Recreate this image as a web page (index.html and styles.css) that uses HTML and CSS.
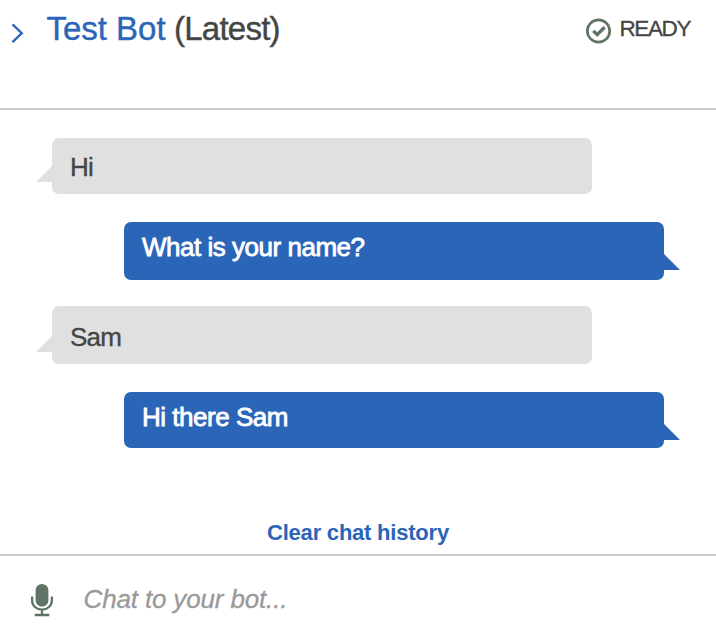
FILE: index.html
```html
<!DOCTYPE html>
<html lang="en">
<head>
<meta charset="utf-8">
<title>Test Bot</title>
<link rel="stylesheet" href="styles.css">
</head>
<body>
<main class="panel">
  <header class="header">
    <svg class="chevron" width="14" height="22" viewBox="0 0 14 22" fill="none" stroke="#2b65b8" stroke-width="2.3"><path d="M2.5 2.3 11.8 11.2 2.5 20.2"/></svg>
    <h1 class="title"><span class="bot-name">Test Bot</span> (Latest)</h1>
    <div class="status">
      <svg class="status-icon" width="26" height="26" viewBox="0 0 26 26" fill="none" stroke="#5f7464"><circle cx="12.5" cy="13" r="11.2" stroke-width="2.7"/><path d="M7.3 12.9 11.2 16.7 18.6 9.3" stroke-width="3.4"/></svg>
      <span class="status-text">READY</span>
    </div>
  </header>
  <section class="messages">
    <div class="bubble user">Hi</div>
    <div class="bubble bot tall">What is your name?</div>
    <div class="bubble user tall">Sam</div>
    <div class="bubble bot">Hi there Sam</div>
    <a class="clear">Clear chat history</a>
  </section>
  <footer class="composer">
    <svg class="mic" width="24" height="34" viewBox="0 0 24 34"><rect x="5.6" y="1" width="12.8" height="22.6" rx="6.4" fill="#5f7464"/><path d="M2.1 13.5V17.5A9.9 9.2 0 0 0 21.9 17.5V13.5M12 26.7V31.8M4.7 32H19.3" fill="none" stroke="#5f7464" stroke-width="2.3"/></svg>
    <input class="entry" type="text" placeholder="Chat to your bot..." aria-label="Chat to your bot">
  </footer>
</main>
</body>
</html>
```
FILE: styles.css
```css
* {
  box-sizing: border-box;
}

body {
  margin: 0;
  background: #fff;
  color: #444645;
  font-family: "Liberation Sans", Arial, sans-serif;
}

.panel {
  display: flex;
  flex-direction: column;
  width: 716px;
  height: 630px;
  overflow: hidden;
}

.header {
  display: flex;
  align-items: flex-start;
  height: 110px;
  padding: 10px 26px 0 10px;
  border-bottom: 2px solid #c5cad0;
}

.chevron {
  margin-top: 12px;
}

.title {
  margin: 0 0 0 22.5px;
  font-size: 33px;
  font-weight: 400;
  line-height: 38px;
  letter-spacing: -0.75px;
  -webkit-text-stroke: 0.4px currentColor;
}

.bot-name {
  color: #2b65b8;
  letter-spacing: -0.02px;
}

.status {
  display: flex;
  align-items: flex-start;
  margin-left: auto;
}

.status-icon {
  margin-top: 8px;
}

.status-text {
  margin-left: 7.5px;
  font-size: 22.5px;
  line-height: 38px;
  letter-spacing: -1.4px;
  -webkit-text-stroke: 0.3px currentColor;
}

.messages {
  display: flex;
  flex-direction: column;
  height: 444px;
  padding: 28px 52px 0;
}

.bubble {
  position: relative;
  width: 540px;
  height: 56px;
  margin-bottom: 28px;
  padding: 0 18px;
  border-radius: 7px;
  font-size: 26px;
  letter-spacing: -0.8px;
  -webkit-text-stroke: 0.35px currentColor;
}

.tall {
  height: 58px;
}

.bot.tall {
  margin-bottom: 26px;
}

.user {
  background: #e0e0e0;
  line-height: 58px;
}

.user.tall {
  line-height: 62px;
}

.bot {
  align-self: flex-end;
  background: #2b65b8;
  color: #fff;
  line-height: 50px;
  letter-spacing: -0.48px;
  -webkit-text-stroke: 0.8px currentColor;
}

.bubble::after {
  content: "";
  position: absolute;
  width: 16px;
  height: 16px;
}

.user::after {
  top: 28px;
  left: -16px;
  background: #e0e0e0;
  clip-path: polygon(100% 0, 100% 100%, 0 100%);
}

.user.tall::after {
  top: 30px;
}

.bot::after {
  top: 32px;
  right: -16px;
  background: #2b65b8;
  clip-path: polygon(0 0, 100% 100%, 0 100%);
}

.clear {
  align-self: center;
  margin-top: 44px;
  color: #2b65b8;
  font-size: 22px;
  font-weight: 700;
  line-height: 26px;
  letter-spacing: -0.22px;
}

.composer {
  display: flex;
  height: 76px;
  padding: 0 30px;
  border-top: 2px solid #c5cad0;
}

.mic {
  margin-top: 27px;
}

.entry {
  flex: 1;
  height: 40px;
  margin: 23px 0 0 29.5px;
  padding: 0;
  border: 0;
  outline: 0;
  background: transparent;
  color: #444645;
  font: italic 26px "Liberation Sans", Arial, sans-serif;
  letter-spacing: -0.15px;
}

.entry::placeholder {
  color: #999;
  -webkit-text-stroke: 0.3px #999;
}
```
